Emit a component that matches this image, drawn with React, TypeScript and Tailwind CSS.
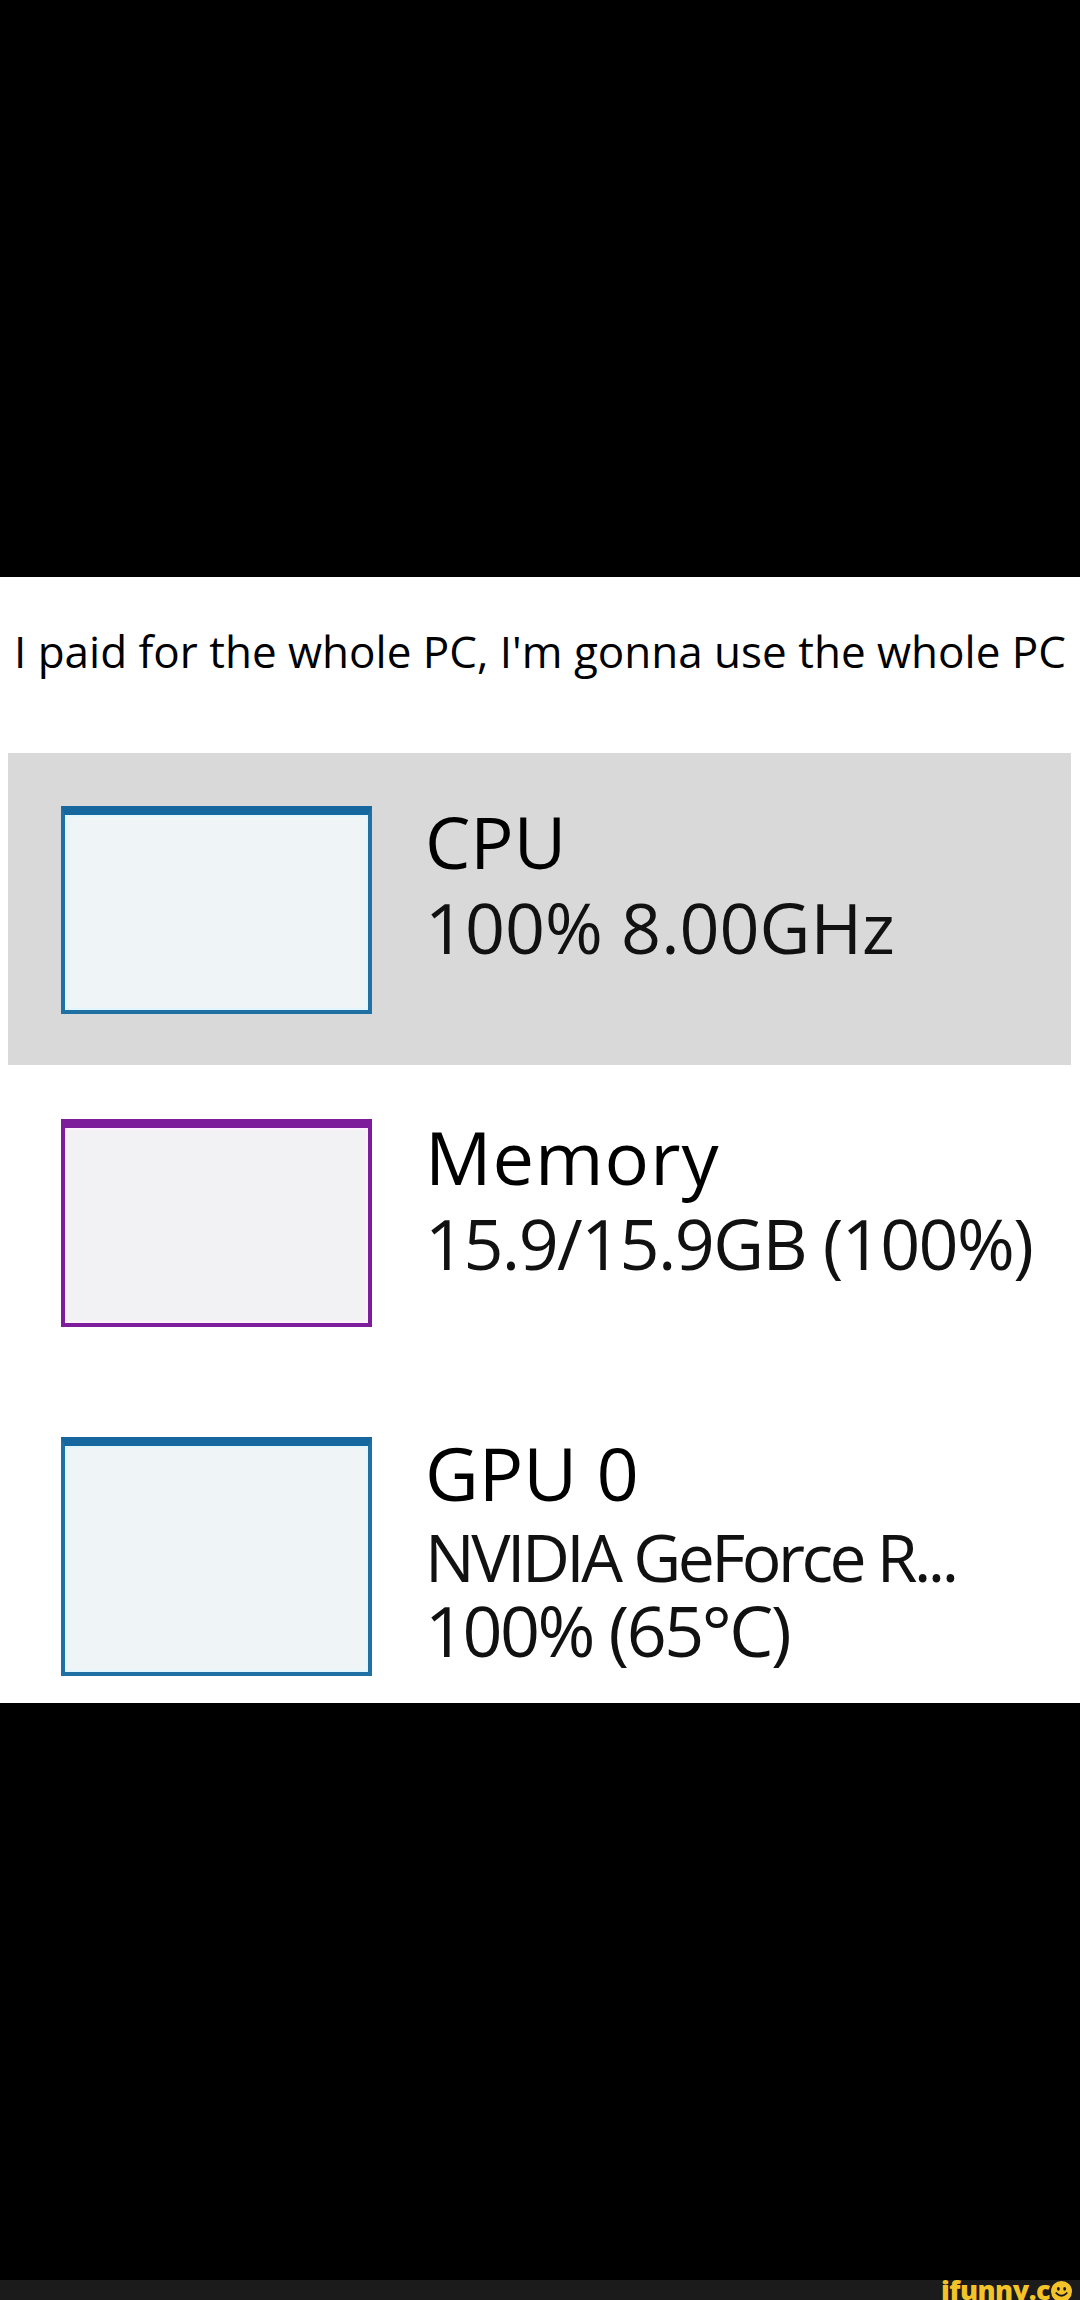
import React from 'react'

const sans = { fontFamily: '"Open Sans", "Noto Sans", sans-serif' }

function PurpleBox() {
  return (
    <div className="w-[311px] h-[208px] shrink-0 border-[4px] border-t-[9px] border-[#7d1d9c] bg-[#f2f1f3] shadow-[inset_0_0_0_2px_#fbf2fd]" />
  )
}

function BlueBox({ height }: { height: string }) {
  return (
    <div
      className={
        'w-[311px] shrink-0 border-[4px] border-t-[9px] border-[#1f70a3] border-t-[#16679d] bg-[#eff4f7] shadow-[inset_0_0_0_2px_#e3f6fd] ' +
        height
      }
    />
  )
}

function Smiley() {
  return (
    <svg width="21" height="21" viewBox="0 0 20 20" className="ml-[1px] mt-[1px]">
      <circle cx="10" cy="10" r="10" fill="#f4c327" />
      <ellipse cx="7" cy="7.5" rx="1.4" ry="1.8" fill="#1b1b1b" />
      <ellipse cx="13" cy="7.5" rx="1.4" ry="1.8" fill="#1b1b1b" />
      <path d="M5 11.5 Q10 16.5 15 11.5" stroke="#1b1b1b" strokeWidth="1.8" fill="none" strokeLinecap="round" />
    </svg>
  )
}

export default function App() {
  return (
    <div className="w-[1080px] h-[2300px] bg-black flex flex-col overflow-hidden" style={sans}>
      <div className="h-[577px] shrink-0 bg-black" />

      <div className="h-[1126px] shrink-0 bg-white flex flex-col">
        <div className="h-[176px] shrink-0 pt-[52px]">
          <p className="text-center text-[44px] leading-[44px] text-black">
            I paid for the whole PC, I'm gonna use the whole PC
          </p>
        </div>

        {/* CPU, selected */}
        <div className="h-[312px] shrink-0 ml-[8px] mr-[9px] bg-[#d9d9d9] pt-[45px] pl-[53px] flex items-start gap-[53px]">
          <div className="mt-[8px]">
            <BlueBox height="h-[208px]" />
          </div>
          <div className="text-black">
            <div className="text-[72px] leading-[86px]">CPU</div>
            <div className="text-[70px] leading-[86px] text-[#111]">100% 8.00GHz</div>
          </div>
        </div>

        {/* Memory */}
        <div className="mt-[49px] pl-[61px] flex items-start gap-[53px]">
          <div className="mt-[5px]">
            <PurpleBox />
          </div>
          <div className="text-black">
            <div className="text-[74px] leading-[86px] tracking-[1px]">Memory</div>
            <div className="text-[70px] leading-[86px] text-[#111] tracking-[-1.6px]">15.9/15.9GB (100%)</div>
          </div>
        </div>

        {/* GPU */}
        <div className="mt-[103px] pl-[61px] flex items-start gap-[53px]">
          <div className="mt-[7px]">
            <BlueBox height="h-[239px]" />
          </div>
          <div className="text-black">
            <div className="text-[74px] leading-[86px]">GPU 0</div>
            <div className="mt-[3px] text-[66px] leading-[74px] text-[#111] tracking-[-3.5px]">NVIDIA GeForce R...</div>
            <div className="text-[70px] leading-[74px] text-[#111] tracking-[-2.5px]">100% (65°C)</div>
          </div>
        </div>
      </div>

      <div className="h-[577px] shrink-0 bg-black" />

      <div className="h-[20px] shrink-0 bg-[#1b1b1b] flex justify-end items-start pr-[8px] overflow-hidden">
        <span className="text-[27px] leading-[27px] font-extrabold text-[#f4c327] tracking-[-0.5px] -mt-[4px]">
          ifunny.c
        </span>
        <Smiley />
      </div>
    </div>
  )
}
